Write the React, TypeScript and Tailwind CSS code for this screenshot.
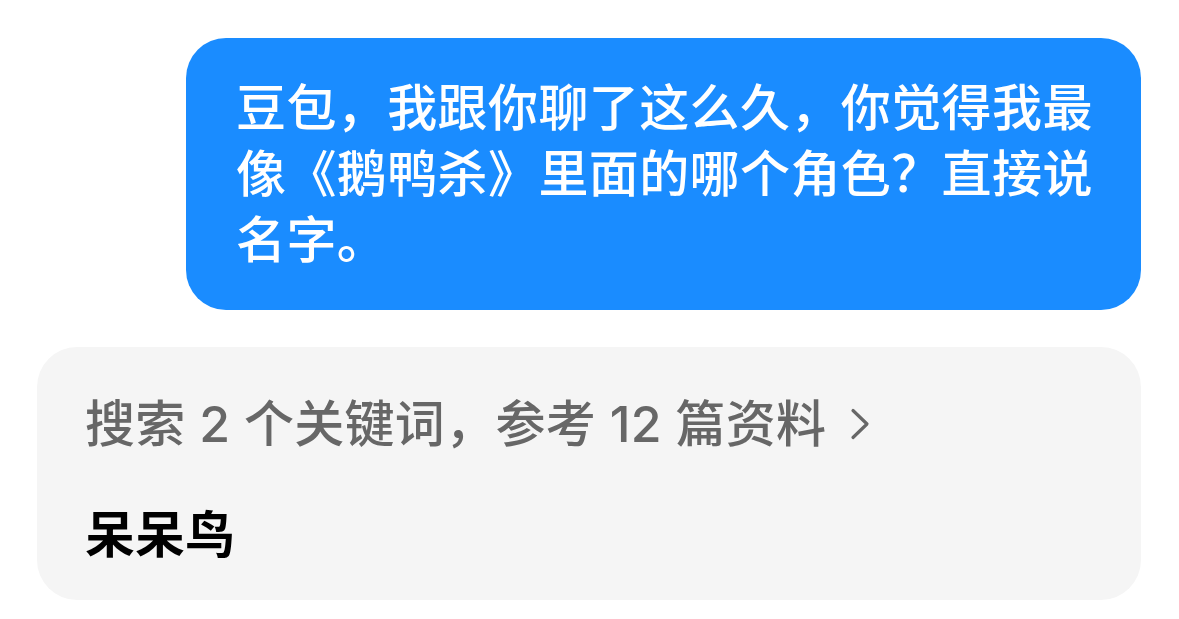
import React from "react";

const font = {
  fontFamily: '"Inter", "Noto Sans CJK SC", sans-serif',
};

function Chevron() {
  return (
    <svg width="20" height="32" viewBox="0 0 20 32" fill="none" className="ml-[24px]">
      <path d="M3 2.5 L17 16 L3 29.5" stroke="#676767" strokeWidth="3.2" strokeLinecap="round" strokeLinejoin="round" />
    </svg>
  );
}

export default function App() {
  return (
    <div className="w-[1179px] h-[619px] bg-white overflow-hidden" style={font}>
      <div className="flex flex-col gap-[37px] pt-[38px] pl-[37px] pr-[38px]">
        {/* outgoing message */}
        <div className="self-end w-[955px] rounded-[40px] bg-[#1a8cff] pl-[50px] pr-[45px] pt-[37px] pb-[37px] text-white text-[50px] leading-[66px] font-medium tracking-[0.4px]">
          豆包，我跟你聊了这么久，你觉得我最像《鹅鸭杀》里面的哪个角色？直接说名字。
        </div>

        {/* reply card */}
        <div className="w-full h-[253px] rounded-[40px] bg-[#f5f5f5] pl-[48px] pt-[44px]">
          <div className="flex items-center text-[#676767] text-[50px] leading-[66px] font-medium tracking-[0.3px]">
            <span>搜索 2 个关键词，参考 12 篇资料</span>
            <Chevron />
          </div>
          <div className="mt-[45px] text-black text-[50px] leading-[66px] font-semibold">呆呆鸟</div>
        </div>
      </div>
    </div>
  );
}
